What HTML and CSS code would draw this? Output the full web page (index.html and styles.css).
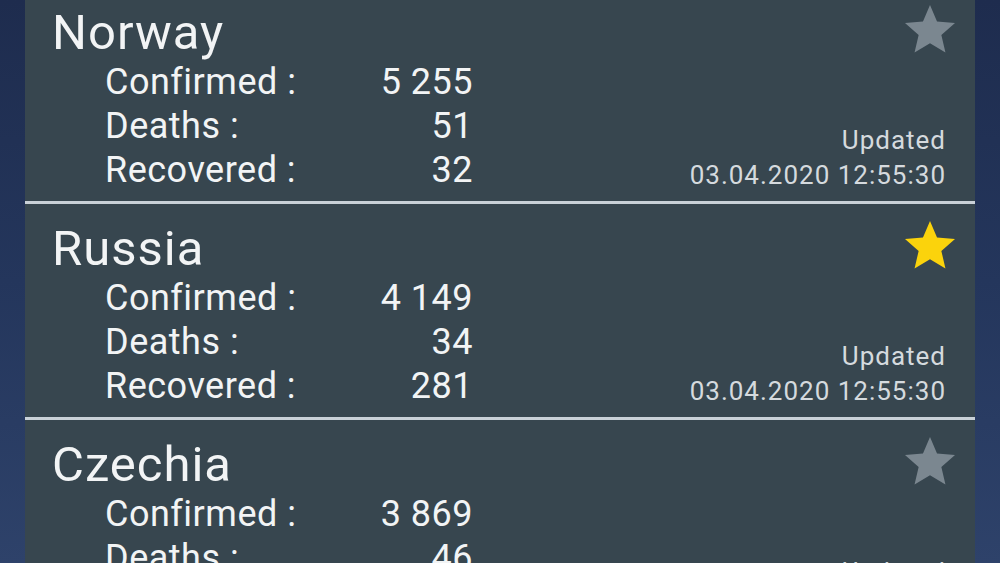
FILE: index.html
```html
<!DOCTYPE html>
<html>
<head>
<meta charset="utf-8">
<link rel="stylesheet" href="styles.css">
</head>
<body>
<div class="panel">
  <div class="list">
    <div class="card">
      <div class="main">
        <div class="name">Norway</div>
        <div class="row"><span class="label">Confirmed :</span><span class="value">5 255</span></div>
        <div class="row"><span class="label">Deaths :</span><span class="value">51</span></div>
        <div class="row"><span class="label">Recovered :</span><span class="value">32</span></div>
      </div>
      <div class="side">
        <svg class="star" viewBox="0 0 24 24"><path d="M12 17.27L18.18 21l-1.64-7.03L22 9.24l-7.19-.61L12 2 9.19 8.63 2 9.24l5.46 4.73L5.82 21z"/></svg>
        <div class="updated">Updated<br>03.04.2020 12:55:30</div>
      </div>
    </div>
    <div class="card">
      <div class="main">
        <div class="name">Russia</div>
        <div class="row"><span class="label">Confirmed :</span><span class="value">4 149</span></div>
        <div class="row"><span class="label">Deaths :</span><span class="value">34</span></div>
        <div class="row"><span class="label">Recovered :</span><span class="value">281</span></div>
      </div>
      <div class="side">
        <svg class="star fav" viewBox="0 0 24 24"><path d="M12 17.27L18.18 21l-1.64-7.03L22 9.24l-7.19-.61L12 2 9.19 8.63 2 9.24l5.46 4.73L5.82 21z"/></svg>
        <div class="updated">Updated<br>03.04.2020 12:55:30</div>
      </div>
    </div>
    <div class="card">
      <div class="main">
        <div class="name">Czechia</div>
        <div class="row"><span class="label">Confirmed :</span><span class="value">3 869</span></div>
        <div class="row"><span class="label">Deaths :</span><span class="value">46</span></div>
        <div class="row"><span class="label">Recovered :</span><span class="value">25</span></div>
      </div>
      <div class="side">
        <svg class="star" viewBox="0 0 24 24"><path d="M12 17.27L18.18 21l-1.64-7.03L22 9.24l-7.19-.61L12 2 9.19 8.63 2 9.24l5.46 4.73L5.82 21z"/></svg>
        <div class="updated">Updated<br>03.04.2020 12:55:30</div>
      </div>
    </div>
  </div>
</div>
</body>
</html>
```
FILE: styles.css
```css
html, body {
  margin: 0;
  padding: 0;
  height: 100%;
  overflow: hidden;
}
body {
  background: linear-gradient(180deg, #1e2c4e 0%, #24365c 50%, #2e426a 100%);
  font-family: Roboto, "Noto Sans", sans-serif;
  color: #f2f4f5;
}
.panel {
  margin: 0 25px;
  height: 100%;
  background: #37464f;
  overflow: hidden;
}
.list {
  margin-top: -12px;
}
.card {
  display: flex;
  justify-content: space-between;
  height: 213px;
  border-bottom: 3px solid #c9d1d8;
}
.main {
  padding: 17px 0 0 27px;
}
.name {
  font-size: 49px;
  line-height: 55px;
  letter-spacing: 1px;
}
.row {
  display: flex;
  font-size: 36px;
  line-height: 44px;
  letter-spacing: 0.5px;
  padding-left: 53px;
}
.label {
  width: 260px;
}
.value {
  width: 108px;
  text-align: right;
}
.side {
  display: flex;
  flex-direction: column;
  align-items: flex-end;
  justify-content: space-between;
  padding: 12px 15px 8px 0;
}
.star {
  width: 60px;
  height: 60px;
  fill: #7b8790;
}
.star.fav {
  fill: #fbd30c;
}
.updated {
  font-size: 26px;
  line-height: 35px;
  letter-spacing: 1px;
  text-align: right;
  color: #d5dade;
  margin-right: 14px;
}
```
